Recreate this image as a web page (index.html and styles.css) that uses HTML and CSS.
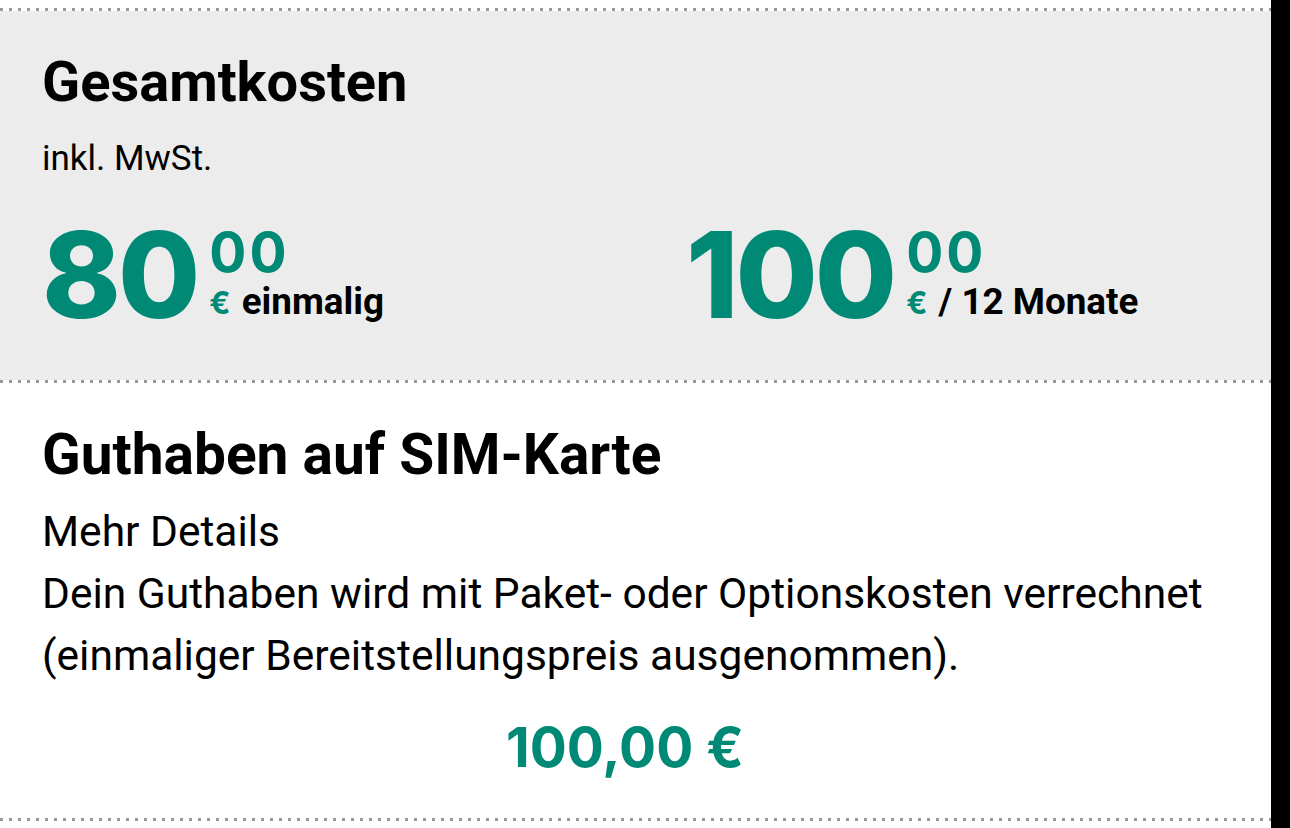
FILE: index.html
```html
<!DOCTYPE html>
<html lang="de">
<head>
<meta charset="utf-8">
<title>Gesamtkosten</title>
<link rel="stylesheet" href="styles.css">
</head>
<body>
<div class="page">
  <main class="card">
    <div class="dots"></div>
    <section class="total">
      <h2 class="title">Gesamtkosten</h2>
      <p class="tax">inkl. MwSt.</p>
      <div class="prices">
        <div class="price">
          <span class="big">80</span>
          <span class="side">
            <span class="cents">00</span>
            <span class="unit"><span class="eur">€</span> einmalig</span>
          </span>
        </div>
        <div class="price">
          <span class="big">100</span>
          <span class="side">
            <span class="cents">00</span>
            <span class="unit"><span class="eur">€</span> / 12 Monate</span>
          </span>
        </div>
      </div>
    </section>
    <div class="dots"></div>
    <section class="credit">
      <h2 class="title title-lg">Guthaben auf SIM-Karte</h2>
      <div class="body">
        <p>Mehr Details</p>
        <p>Dein Guthaben wird mit Paket- oder Optionskosten verrechnet (einmaliger Bereitstellungspreis ausgenommen).</p>
      </div>
      <div class="amount">100,00 €</div>
    </section>
    <div class="dots"></div>
  </main>
  <div class="rail"></div>
</div>
</body>
</html>
```
FILE: styles.css
```css
html, body {
  margin: 0;
  padding: 0;
  background: #fff;
}
body {
  font-family: Roboto, "Liberation Sans", sans-serif;
  color: #000;
}
.page {
  display: flex;
  height: 828px;
  overflow: hidden;
}
.card {
  width: 1271px;
  flex: none;
  padding-top: 8px;
  background: #fff;
}
.rail {
  flex: 1;
  background: #000;
}
.dots {
  height: 3px;
  background: repeating-linear-gradient(90deg, #999 0 3px, transparent 3px 9px);
}
.total {
  background: #ececec;
  height: 369px;
  box-sizing: border-box;
  padding: 43px 63px 0 42px;
}
.title {
  margin: 0;
  font-size: 56px;
  line-height: 56px;
  font-weight: 700;
}
.title-lg {
  font-size: 56.8px;
}
.tax {
  margin: 31px 0 0;
  font-size: 35px;
  line-height: 35px;
}
.prices {
  display: grid;
  grid-template-columns: 644px auto;
  margin-top: 40px;
}
.price {
  display: flex;
  align-items: flex-start;
  color: #008a76;
}
.big {
  font-family: Inter, Roboto, sans-serif;
  font-weight: 800;
  font-size: 119px;
  line-height: 119px;
  letter-spacing: -3px;
}
.side {
  display: flex;
  flex-direction: column;
  padding-top: 9px;
  margin-left: 12px;
}
.cents {
  font-family: Inter, Roboto, sans-serif;
  font-weight: 700;
  font-size: 55px;
  line-height: 55px;
  letter-spacing: 3px;
}
.unit {
  margin-top: 4px;
  font-size: 36.8px;
  line-height: 36px;
  font-weight: 700;
  color: #000;
  white-space: nowrap;
}
.eur {
  font-family: Inter, Roboto, sans-serif;
  color: #008a76;
  font-size: 31px;
  margin-right: 2px;
}
.credit {
  height: 435px;
  box-sizing: border-box;
  padding: 44px 63px 0 42px;
}
.body {
  margin-top: 18px;
  font-size: 42.5px;
  line-height: 62px;
}
.body p {
  margin: 0;
}
.amount {
  margin-top: 33px;
  text-align: center;
  font-family: Inter, Roboto, sans-serif;
  font-weight: 700;
  font-size: 55px;
  line-height: 55px;
  color: #008a76;
}
```
